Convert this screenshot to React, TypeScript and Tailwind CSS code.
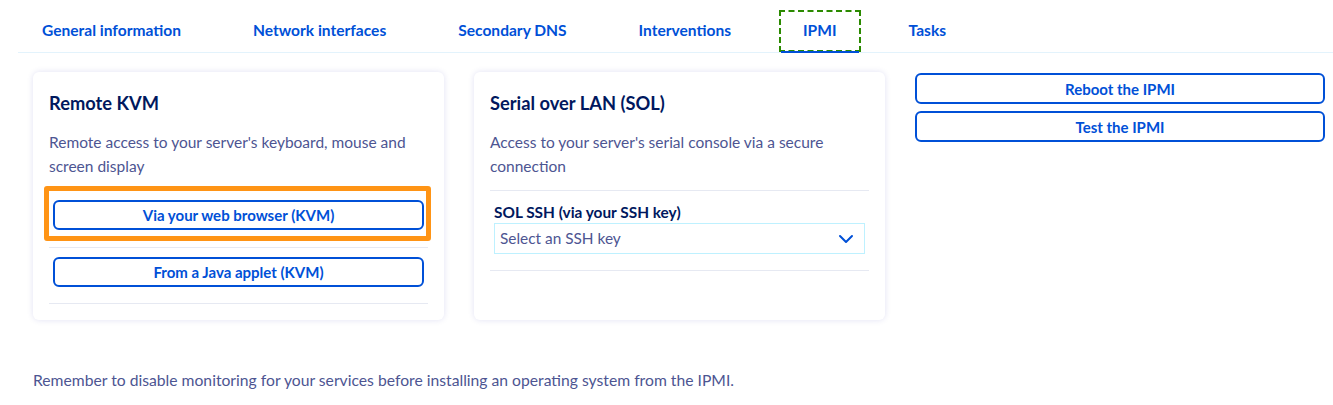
import React from "react";

const font = { fontFamily: "Lato, 'Noto Sans', sans-serif" };

function OutlineButton({ children, className = "" }: { children: React.ReactNode; className?: string }) {
  return (
    <button
      className={
        "flex w-full items-center justify-center rounded-[6px] border-2 border-[#0050d7] bg-white text-[15px] font-bold leading-[20px] text-[#0050d7] " +
        className
      }
    >
      {children}
    </button>
  );
}

export default function App() {
  const tabs = ["General information", "Network interfaces", "Secondary DNS", "Interventions", "IPMI", "Tasks"];
  return (
    <div className="min-h-[405px] w-[1333px] bg-white" style={font}>
      {/* Tabs */}
      <div className="pt-[10px] pl-[18px]">
        <nav className="flex border-b border-[#e3f3fc]">
          {tabs.map((t) => {
            const active = t === "IPMI";
            return (
              <div
                key={t}
                className={
                  "relative mr-[24px] flex h-[42px] items-center px-[24px] text-[15.55px] font-bold text-[#0050d7] " +
                  (active ? "outline-2 outline-dashed outline-[#2b8a00] -outline-offset-2" : "")
                }
              >
                {t}
                {active && <span className="absolute right-[2px] bottom-[-1px] left-[2px] h-[2px] bg-[#0050d7]" />}
              </div>
            );
          })}
        </nav>
      </div>

      {/* Content */}
      <div className="grid grid-cols-[411px_411px_410px] gap-[30px] pt-[19px] pl-[33px]">
        {/* Remote KVM */}
        <div className="rounded-[6px] bg-white px-4 pt-[17px] pb-4 shadow-[0_0_6px_rgba(0,14,156,0.12)]">
          <h2 className="text-[18.3px] leading-[28px] font-bold text-[#00185e]">Remote KVM</h2>
          <p className="mt-[13px] text-[15.5px] leading-[24px] text-[#4d5592]">
            Remote access to your server's keyboard, mouse and screen display
          </p>
          <div className="mt-[12px]">
            <div className="border-b border-[#e6e9f2] px-[4px] pt-[10px] pb-[17px]">
              <div className="relative">
                <div className="pointer-events-none absolute top-[-14px] right-[-7px] bottom-[-11px] left-[-9px] rounded-[3px] border-[5px] border-[#ff9415]" />
                <OutlineButton className="h-[30px]">Via your web browser (KVM)</OutlineButton>
              </div>
            </div>
            <div className="border-b border-[#e6e9f2] px-[4px] pt-[9px] pb-[16px]">
              <OutlineButton className="h-[30px]">From a Java applet (KVM)</OutlineButton>
            </div>
          </div>
        </div>

        {/* SOL */}
        <div className="rounded-[6px] bg-white px-4 pt-[17px] pb-4 shadow-[0_0_6px_rgba(0,14,156,0.12)]">
          <h2 className="text-[18.3px] leading-[28px] font-bold text-[#00185e]">Serial over LAN (SOL)</h2>
          <p className="mt-[13px] text-[15.5px] leading-[24px] text-[#4d5592]">
            Access to your server's serial console via a secure connection
          </p>
          <div className="mt-[12px] border-t border-[#e6e9f2]">
            <div className="border-b border-[#e6e9f2] px-[4px] pt-[11px] pb-[16px]">
              <label className="block text-[15.4px] leading-[20px] font-bold text-[#00185e]">
                SOL SSH (via your SSH key)
              </label>
              <div className="mt-[1px] flex h-[31px] items-center justify-between border border-[#bef1ff] bg-white pr-[10px] pl-[5px]">
                <span className="text-[15.4px] text-[#4d5592]">Select an SSH key</span>
                <svg width="16" height="10" viewBox="0 0 16 10" fill="none">
                  <path d="M2 2l6 6 6-6" stroke="#0050d7" strokeWidth="2" strokeLinecap="round" strokeLinejoin="round" />
                </svg>
              </div>
            </div>
          </div>
        </div>

        {/* Right buttons */}
        <div className="flex flex-col gap-[7px] pt-[1px]">
          <OutlineButton className="h-[31px]">Reboot the IPMI</OutlineButton>
          <OutlineButton className="h-[31px]">Test the IPMI</OutlineButton>
        </div>
      </div>

      <p className="mt-[50px] pl-[33px] text-[15.7px] leading-[20px] text-[#4d5592]">
        Remember to disable monitoring for your services before installing an operating system from the IPMI.
      </p>
    </div>
  );
}
